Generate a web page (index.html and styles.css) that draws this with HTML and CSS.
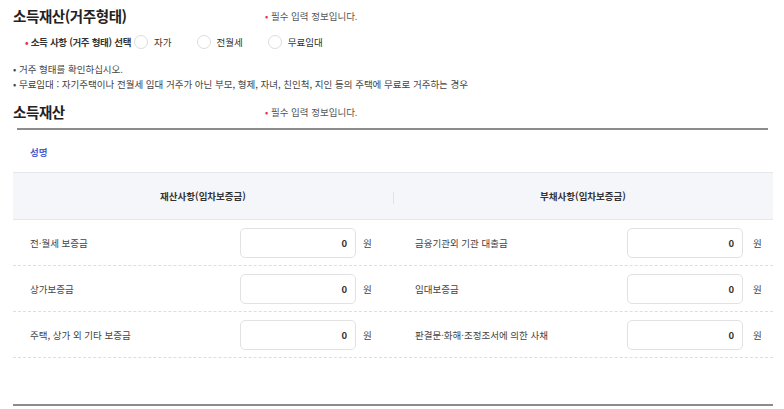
FILE: index.html
```html
<!DOCTYPE html>
<html lang="ko">
<head>
    <meta charset="UTF-8" />
    <meta name="viewport" content="width=device-width, initial-scale=1" />
    <title>소득재산</title>
    <link rel="stylesheet" href="styles.css">
</head>
<body>
    <div class="sec-head first">
        <h2>소득재산(거주형태)</h2>
        <p class="req-note"><span class="dot">•</span> 필수 입력 정보입니다.</p>
    </div>

    <div class="house-type">
        <span class="field-name"><span class="dot">•</span> 소득 사항 (거주 형태) 선택</span>
        <label class="radio"><input type="radio" name="house" /><span class="circle"></span>자가</label>
        <label class="radio"><input type="radio" name="house" /><span class="circle"></span>전월세</label>
        <label class="radio"><input type="radio" name="house" /><span class="circle"></span>무료임대</label>
    </div>

    <ul class="guide">
        <li>거주 형태를 확인하십시오.</li>
        <li>무료임대 : 자기주택이나 전월세 임대 거주가 아닌 부모, 형제, 자녀, 친인척, 지인 등의 주택에 무료로 거주하는 경우</li>
    </ul>

    <div class="sec-head">
        <h2>소득재산</h2>
        <p class="req-note"><span class="dot">•</span> 필수 입력 정보입니다.</p>
    </div>
    <hr class="sec-line" />

    <p class="person-name">성명</p>

    <div class="asset-table">
        <div class="thead">
            <div class="th">재산사항(임차보증금)</div>
            <div class="th divider">부채사항(임차보증금)</div>
        </div>
        <div class="tr">
            <div class="cell left">
                <span class="label">전·월세 보증금</span>
                <input class="amount" type="text" value="0" />
                <span class="unit">원</span>
            </div>
            <div class="cell right">
                <span class="label">금융기관외 기관 대출금</span>
                <input class="amount" type="text" value="0" />
                <span class="unit">원</span>
            </div>
        </div>
        <div class="tr">
            <div class="cell left">
                <span class="label">상가보증금</span>
                <input class="amount" type="text" value="0" />
                <span class="unit">원</span>
            </div>
            <div class="cell right">
                <span class="label">임대보증금</span>
                <input class="amount" type="text" value="0" />
                <span class="unit">원</span>
            </div>
        </div>
        <div class="tr">
            <div class="cell left">
                <span class="label">주택, 상가 외 기타 보증금</span>
                <input class="amount" type="text" value="0" />
                <span class="unit">원</span>
            </div>
            <div class="cell right">
                <span class="label">판결문·화해·조정조서에 의한 사채</span>
                <input class="amount" type="text" value="0" />
                <span class="unit">원</span>
            </div>
        </div>
    </div>

    <div class="bottom-line"></div>
</body>
</html>
```

FILE: styles.css
```css
body {
    margin: 0;
    padding: 0 11px 0 13px;
    font-family: "Noto Sans CJK KR", "Noto Sans", sans-serif;
    font-size: 9.5px;
    color: #333;
    background: #fff;
}
.dot {
    color: #e0343c;
}
.sec-head {
    display: grid;
    grid-template-columns: 252px 1fr;
    align-items: center;
    margin-top: 10px;
}
.sec-head.first {
    margin-top: 6px;
}
.sec-head h2 {
    margin: 0;
    font-size: 14.5px;
    line-height: 20px;
    font-weight: bold;
    color: #222;
    letter-spacing: -0.4px;
}
.req-note {
    margin: 0;
    line-height: 20px;
    color: #555;
}
.house-type {
    display: flex;
    align-items: center;
    height: 16px;
    margin-top: 8px;
    padding-left: 12px;
}
.field-name {
    font-weight: bold;
    color: #333;
    letter-spacing: -0.3px;
    margin-right: 3px;
}
.radio {
    display: flex;
    align-items: center;
    margin-right: 25px;
    color: #333;
}
.radio input {
    display: none;
}
.circle {
    width: 12px;
    height: 12px;
    border: 1px solid #dcdcdc;
    border-radius: 50%;
    background: #fff;
    margin-right: 6px;
}
.guide {
    list-style: none;
    margin: 12px 0 0;
    padding: 0;
    line-height: 15px;
    color: #444;
}
.guide li::before {
    content: "• ";
}
.sec-line {
    margin: 6px 5px 0 4px;
    border: none;
    border-top: 2px solid #8c8c8c;
}
.person-name {
    margin: 15px 0 0 17px;
    line-height: 14px;
    color: #4a5fd6;
    font-weight: bold;
}
.asset-table {
    margin-top: 13px;
}
.thead {
    display: grid;
    grid-template-columns: 380px 380px;
    height: 46px;
    background: #f5f6fa;
    border-top: 1px solid #e6e7ec;
    border-bottom: 1px solid #e6e7ec;
}
.th {
    display: flex;
    align-items: center;
    justify-content: center;
    font-weight: bold;
    color: #333;
    position: relative;
}
.th.divider::before {
    content: "";
    position: absolute;
    left: 0;
    top: 19px;
    height: 12px;
    border-left: 1px solid #e0e1e6;
}
.tr {
    display: grid;
    grid-template-columns: 380px 380px;
    height: 45px;
    border-bottom: 1px dashed #dedede;
}
.cell {
    display: flex;
    align-items: center;
}
.cell.left {
    padding: 0 14px 0 17px;
}
.cell.right {
    padding: 0 11px 0 22px;
}
.label {
    flex: 1;
    color: #444;
}
.amount {
    box-sizing: border-box;
    width: 116px;
    height: 30px;
    padding: 0 8px;
    border: 1px solid #e2e2e2;
    border-radius: 5px;
    text-align: right;
    font-family: inherit;
    font-size: 9.5px;
    font-weight: bold;
    color: #333;
    background: #fff;
}
.unit {
    width: 16px;
    margin-left: 7px;
    color: #444;
}
.cell.right .unit {
    margin-left: 10px;
    width: 9px;
}
.bottom-line {
    margin-top: 46px;
    border-top: 2px solid #8c8c8c;
}
```
